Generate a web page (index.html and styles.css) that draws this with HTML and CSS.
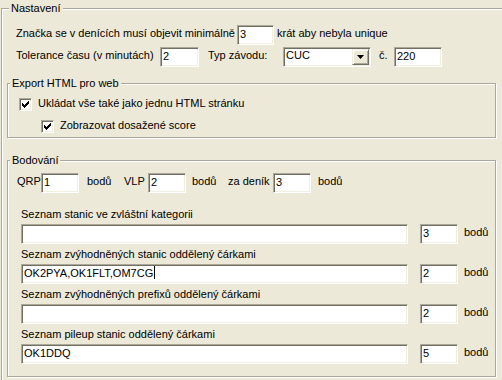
FILE: index.html
```html
<!DOCTYPE html>
<html lang="cs">
<head>
  <meta charset="UTF-8" />
  <meta name="viewport" content="width=device-width, initial-scale=1.0"/>
  <title>Nastavení</title>
  <link rel="stylesheet" href="styles.css">
</head>
<body>
  <fieldset class="group settings">
    <legend>Nastavení</legend>

    <div class="row">
      <span class="text lbl-min">Značka se v denících musí objevit minimálně</span>
      <div class="edit edit-min">3</div>
      <span class="text after-min">krát aby nebyla unique</span>
    </div>

    <div class="row">
      <span class="text lbl-tol">Tolerance času (v minutách)</span>
      <div class="edit edit-tol">2</div>
      <span class="text lbl-typ">Typ závodu:</span>
      <div class="combo">
        <span class="combo-value">CUC</span>
        <span class="combo-btn">
          <svg width="7" height="4" viewBox="0 0 7 4"><path d="M0 0h7L3.5 4z" fill="#000"/></svg>
        </span>
      </div>
      <span class="text lbl-no">č.</span>
      <div class="edit edit-no">220</div>
    </div>

    <fieldset class="group export">
      <legend>Export HTML pro web</legend>
      <div class="check-row">
        <span class="check">
          <svg width="11" height="11" viewBox="0 0 11 11"><path d="M2 4h1v3H2zM3 5h1v3H3zM4 6h1v3H4zM5 5h1v3H5zM6 4h1v3H6zM7 3h1v3H7zM8 2h1v3H8z" fill="#000"/></svg>
        </span>
        <span class="text">Ukládat vše také jako jednu HTML stránku</span>
      </div>
      <div class="check-row sub">
        <span class="check">
          <svg width="11" height="11" viewBox="0 0 11 11"><path d="M2 4h1v3H2zM3 5h1v3H3zM4 6h1v3H4zM5 5h1v3H5zM6 4h1v3H6zM7 3h1v3H7zM8 2h1v3H8z" fill="#000"/></svg>
        </span>
        <span class="text">Zobrazovat dosažené score</span>
      </div>
    </fieldset>

    <fieldset class="group scoring">
      <legend>Bodování</legend>
      <div class="row points">
        <span class="text lbl-qrp">QRP</span>
        <div class="edit edit-pts">1</div>
        <span class="text unit unit-qrp">bodů</span>
        <span class="text lbl-qrp">VLP</span>
        <div class="edit edit-pts">2</div>
        <span class="text unit unit-vlp">bodů</span>
        <span class="text lbl-log">za deník</span>
        <div class="edit edit-pts">3</div>
        <span class="text unit unit-log">bodů</span>
      </div>

      <div class="list">
        <div class="text list-label">Seznam stanic ve zvláštní kategorii</div>
        <div class="list-row">
          <div class="edit edit-wide"></div>
          <div class="edit edit-pts edit-side">3</div>
          <span class="text unit">bodů</span>
        </div>
      </div>

      <div class="list">
        <div class="text list-label">Seznam zvýhodněných stanic oddělený čárkami</div>
        <div class="list-row">
          <div class="edit edit-wide">OK2PYA,OK1FLT,OM7CG<span class="caret"></span></div>
          <div class="edit edit-pts edit-side">2</div>
          <span class="text unit">bodů</span>
        </div>
      </div>

      <div class="list">
        <div class="text list-label">Seznam zvýhodněných prefixů oddělený čárkami</div>
        <div class="list-row">
          <div class="edit edit-wide"></div>
          <div class="edit edit-pts edit-side">2</div>
          <span class="text unit">bodů</span>
        </div>
      </div>

      <div class="list">
        <div class="text list-label">Seznam pileup stanic oddělený čárkami</div>
        <div class="list-row">
          <div class="edit edit-wide">OK1DDQ</div>
          <div class="edit edit-pts edit-side">5</div>
          <span class="text unit">bodů</span>
        </div>
      </div>
    </fieldset>
  </fieldset>
</body>
</html>
```

FILE: styles.css
```css
html, body {
  margin: 0;
  padding: 0;
  height: 100%;
  overflow: hidden;
  background: #ece9d8;
  font-family: "Liberation Sans", Arial, sans-serif;
  font-size: 11px;
  color: #000;
}

/* etched group box */
.group {
  margin: 0;
  padding: 0 2px;
  border: 1px solid #aca899;
  box-shadow: inset 1px 1px 0 #fff, 1px 1px 0 #fff;
  min-width: 0;
}

.group legend {
  padding: 0 2px;
  line-height: 13px;
  background: #ece9d8;
}

.settings {
  margin: 2px 0 0 1px;
  padding: 10px 8px 8px 5px;
  width: 489px;
}

.settings > legend {
  margin-left: 2px;
}

.text {
  line-height: 13px;
  margin-bottom: 3px;
  white-space: nowrap;
}

.row {
  display: flex;
  align-items: center;
  height: 20px;
  padding-left: 9px;
}

.row + .row {
  margin-top: 2px;
}

/* sunken edit box */
.edit {
  box-sizing: border-box;
  height: 20px;
  display: flex;
  align-items: center;
  padding: 0 2px 3px;
  background: #fff;
  border: 1px solid;
  border-color: #aca899 #fff #fff #aca899;
  box-shadow: inset 1px 1px 0 #716f64, inset -1px -1px 0 #f1efe2;
  white-space: nowrap;
  overflow: hidden;
}

.caret {
  display: inline-block;
  width: 1px;
  height: 13px;
  margin-left: 1px;
  background: #000;
}

.lbl-min { width: 221px; }
.edit-min { width: 37px; }
.after-min { margin-left: 3px; }

.lbl-tol { width: 144px; }
.edit-tol { width: 39px; }
.lbl-typ { width: 75px; margin-left: 9px; }
.lbl-no { width: 15px; margin-left: 8px; }
.edit-no { width: 48px; }

.combo {
  box-sizing: border-box;
  width: 88px;
  height: 20px;
  display: flex;
  align-items: center;
  padding-left: 2px;
  background: #fff;
  border: 1px solid;
  border-color: #aca899 #fff #fff #aca899;
  box-shadow: inset 1px 1px 0 #716f64, inset -1px -1px 0 #f1efe2;
}

.combo-value {
  flex: 1;
  line-height: 13px;
  margin-bottom: 3px;
}

.combo-btn {
  box-sizing: border-box;
  width: 17px;
  height: 16px;
  margin-right: 1px;
  display: flex;
  align-items: center;
  justify-content: center;
  background: #ece9d8;
  border: 1px solid;
  border-color: #f1efe2 #716f64 #716f64 #f1efe2;
  box-shadow: inset 1px 1px 0 #fff, inset -1px -1px 0 #aca899;
}

/* export */
.export {
  box-sizing: border-box;
  width: 489px;
  margin-top: 10px;
  padding: 6px 2px 2px;
}

.check-row {
  display: flex;
  align-items: center;
  height: 17px;
  margin-left: 9px;
}

.check-row.sub {
  margin-top: 5px;
  margin-left: 31px;
}

.check {
  box-sizing: border-box;
  width: 13px;
  height: 13px;
  margin-right: 6px;
  background: #fff;
  border: 1px solid;
  border-color: #aca899 #fff #fff #aca899;
  box-shadow: inset 1px 1px 0 #716f64, inset -1px -1px 0 #f1efe2;
  display: flex;
}

/* scoring */
.scoring {
  box-sizing: border-box;
  width: 489px;
  margin-top: 16px;
  padding: 6px 2px 12px;
}

.points {
  padding-left: 7px;
}

.lbl-qrp { width: 24px; }
.lbl-log { width: 45px; }
.edit-pts { width: 38px; }
.unit-qrp { width: 37px; margin-left: 8px; }
.unit-vlp { width: 36px; margin-left: 6px; }
.unit-log { margin-left: 7px; }

.list {
  margin-left: 11px;
  margin-top: 4px;
}

.points + .list {
  margin-top: 15px;
}

.list-label {
  margin-bottom: 3px;
}

.list-row {
  display: flex;
  align-items: center;
  height: 20px;
}

.edit-wide { width: 387px; }
.edit-side { margin-left: 12px; }
.list-row .unit { margin-left: 6px; }
```
